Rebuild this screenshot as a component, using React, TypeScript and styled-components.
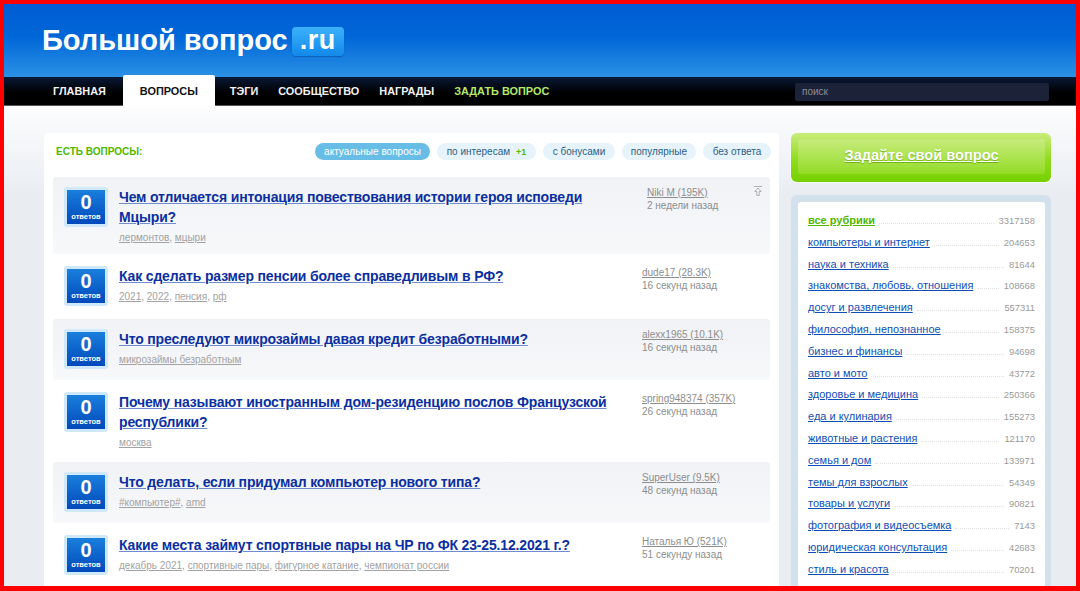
import React from "react";
import styled, { createGlobalStyle } from "styled-components";

const Global = createGlobalStyle`
  html, body { margin: 0; padding: 0; background: #fff; overflow: hidden; }
  * { box-sizing: border-box; }
  body { font-family: "Liberation Sans", Arial, sans-serif; }
`;

const Frame = styled.div`
  width: 1080px;
  height: 591px;
  border: 4px solid #ff0000;
  border-bottom-width: 5px;
  overflow: hidden;
  background: linear-gradient(180deg, #fdfdfe 102px, #e9edf2 190px);
`;

const Header = styled.header`
  height: 73px;
  padding: 19px 0 0 38px;
  display: flex;
  align-items: flex-start;
  background: linear-gradient(180deg, #005bd4 0%, #0067d8 45%, #2b91e4 100%);
`;

const LogoText = styled.span`
  font-size: 29px;
  line-height: 34px;
  font-weight: 700;
  color: #fff;
`;

const LogoBadge = styled.span`
  margin: 4px 0 0 4px;
  width: 52px;
  height: 29px;
  border-radius: 4px;
  background: linear-gradient(180deg, #3cb2fb 0%, #1288ea 100%);
  box-shadow: 0 1px 1px rgba(0, 50, 130, 0.4);
  color: #fff;
  font-size: 27px;
  line-height: 27px;
  font-weight: 700;
  text-align: center;
  letter-spacing: 0.5px;
`;

const Nav = styled.nav`
  height: 29px;
  padding-left: 39px;
  display: flex;
  align-items: stretch;
  background: linear-gradient(180deg, #0a1a38 0%, #000 55%, #000 100%);
  border-bottom: 1px solid #555;
  position: relative;
`;

const NavItem = styled.a<{ $active?: boolean; $accent?: boolean }>`
  display: flex;
  align-items: center;
  font-size: 10.9px;
  font-weight: 700;
  color: ${(p) => (p.$active ? "#111" : p.$accent ? "#b4e86a" : "#f2f2f2")};
  background: ${(p) => (p.$active ? "#fff" : "transparent")};
  padding: 0 ${(p) => (p.$active ? "17px" : "10px")};
  margin: ${(p) => (p.$active ? "-2px 5px 0 7px" : "0")};
  border-radius: ${(p) => (p.$active ? "2px 2px 0 0" : "0")};
  height: ${(p) => (p.$active ? "32px" : "auto")};
  white-space: nowrap;
`;

const Search = styled.div`
  margin: 6px 27px 0 auto;
  width: 254px;
  height: 18px;
  border-radius: 2px;
  background: #1c2238;
  color: #8a8d98;
  font-size: 10px;
  line-height: 18px;
  padding-left: 7px;
`;

const Main = styled.main`
  display: flex;
  align-items: flex-start;
  gap: 12px;
  padding: 27px 0 0 40px;
`;

const Card = styled.section`
  width: 735px;
  height: 480px;
  background: #fff;
  border-radius: 4px 4px 0 0;
  padding: 10px 9px 0 9px;
`;

const CardHead = styled.div`
  display: flex;
  align-items: center;
  height: 17px;
  margin-bottom: 17px;
`;

const CardTitle = styled.h2`
  margin: 0 auto 0 3px;
  font-size: 10px;
  line-height: 17px;
  font-weight: 700;
  color: #4fb800;
`;

const Pills = styled.div`
  display: flex;
  gap: 7px;
  margin-right: -1px;
`;

const Pill = styled.span<{ $active?: boolean; $w: number }>`
  width: ${(p) => p.$w}px;
  height: 17px;
  border-radius: 9px;
  background: ${(p) => (p.$active ? "#68bde6" : "#e6f3fb")};
  color: ${(p) => (p.$active ? "#fff" : "#2d5f86")};
  font-size: 10px;
  line-height: 17px;
  text-align: center;
  white-space: nowrap;
`;

const PlusOne = styled.b`
  color: #5db800;
  font-size: 9px;
  margin-left: 6px;
`;

const Row = styled.article<{ $shaded: boolean; $height: number }>`
  height: ${(p) => p.$height}px;
  padding: ${(p) => (p.$shaded ? "10px" : "12px")} 0 0 11px;
  display: grid;
  grid-template-columns: 44px 511px 1fr;
  column-gap: 11px;
  align-items: start;
  position: relative;
  border-radius: 3px;
  background: ${(p) =>
    p.$shaded ? "linear-gradient(180deg, #f0f2f5 0%, #f7f8fa 100%)" : "transparent"};
`;

const Stat = styled.div`
  width: 44px;
  height: 40px;
  padding-top: 2px;
  border: 3px solid #cfe8fb;
  border-radius: 3px;
  background: linear-gradient(180deg, #1a7fdc 0%, #0049bb 100%);
  background-clip: padding-box;
  color: #fff;
  text-align: center;
`;

const StatNum = styled.div`
  font-size: 20px;
  line-height: 20px;
  font-weight: 700;
`;

const StatLabel = styled.div`
  font-size: 7.5px;
  line-height: 9px;
  font-weight: 700;
`;

const Title = styled.a`
  display: block;
  font-size: 14px;
  letter-spacing: -0.16px;
  line-height: 20px;
  font-weight: 700;
  color: #0b2fa0;
  text-decoration: underline;
  text-decoration-color: #6f8cd0;
`;

const Tags = styled.div`
  margin-top: 1px;
  font-size: 10px;
  line-height: 20px;
  color: #999;
`;

const Tag = styled.a`
  color: #a2a2a2;
  text-decoration: underline;
`;

const Meta = styled.div<{ $shift: number; $raise: number }>`
  margin: ${(p) => -p.$raise}px 0 0 ${(p) => p.$shift}px;
  font-size: 10px;
  line-height: 13px;
  color: #8d8d8d;
  white-space: nowrap;
`;

const Author = styled.a`
  display: block;
  text-decoration: underline;
`;

const PinIcon = styled.svg`
  position: absolute;
  top: 9px;
  right: 8px;
`;

const Side = styled.aside`
  width: 260px;
  display: flex;
  flex-direction: column;
  gap: 13px;
`;

const AskButton = styled.a`
  height: 49px;
  padding: 6px 6px 8px 7px;
  border-radius: 6px;
  background: linear-gradient(180deg, #c9ec7b 0%, #8fdc1c 55%, #76d000 100%);
  box-shadow: 0 0 0 1px #f6f8fa;
`;

const AskInner = styled.span`
  display: block;
  height: 35px;
  border-radius: 2px;
  background: linear-gradient(180deg, #c7ec7d 0%, #93dc26 100%);
  color: #fff;
  font-size: 14.6px;
  line-height: 32px;
  font-weight: 700;
  text-align: center;
  text-decoration: underline;
  text-shadow: 0 1px 1px rgba(70, 130, 0, 0.5);
`;

const CatPanel = styled.div`
  padding: 7px 6px 0 7px;
  height: 400px;
  background: #d3e1ec;
  border-radius: 6px 6px 0 0;
`;

const CatInner = styled.ul`
  list-style: none;
  margin: 0;
  height: 100%;
  padding: 8px 10px 0 10px;
  background: #fff;
  border-radius: 3px 3px 0 0;
`;

const CatRow = styled.li`
  display: flex;
  align-items: baseline;
  height: 21.8px;
  line-height: 21.8px;
`;

const CatLink = styled.a<{ $all?: boolean }>`
  font-size: 11px;
  white-space: nowrap;
  font-weight: ${(p) => (p.$all ? 700 : 400)};
  color: ${(p) => (p.$all ? "#4fb800" : "#0f4fb5")};
  text-decoration: underline;
`;

const Leader = styled.span`
  flex: 1;
  margin: 0 5px 0 4px;
  border-bottom: 1px dotted #e2e2e2;
`;

const CatCount = styled.span`
  font-size: 9.4px;
  color: #9a9a9a;
`;

type Q = { title: string; tags: string[]; author: string; time: string; height: number; pin?: boolean };

const questions: Q[] = [
  { title: "Чем отличается интонация повествования истории героя исповеди Мцыри?", tags: ["лермонтов", "мцыри"], author: "Niki M (195K)", time: "2 недели назад", height: 77, pin: true },
  { title: "Как сделать размер пенсии более справедливым в РФ?", tags: ["2021", "2022", "пенсия", "рф"], author: "dude17 (28.3K)", time: "16 секунд назад", height: 65 },
  { title: "Что преследуют микрозаймы давая кредит безработными?", tags: ["микрозаймы безработным"], author: "alexx1965 (10.1K)", time: "16 секунд назад", height: 61 },
  { title: "Почему называют иностранным дом-резиденцию послов Французской республики?", tags: ["москва"], author: "spring948374 (357K)", time: "26 секунд назад", height: 82 },
  { title: "Что делать, если придумал компьютер нового типа?", tags: ["#компьютер#", "amd"], author: "SuperUser (9.5K)", time: "48 секунд назад", height: 61 },
  { title: "Какие места займут спортвные пары на ЧР по ФК 23-25.12.2021 г.?", tags: ["декабрь 2021", "спортивные пары", "фигурное катание", "чемпионат россии"], author: "Наталья Ю (521K)", time: "51 секунду назад", height: 66 },
];

const categories: [string, string][] = [
  ["все рубрики", "3317158"],
  ["компьютеры и интернет", "204653"],
  ["наука и техника", "81644"],
  ["знакомства, любовь, отношения", "108668"],
  ["досуг и развлечения", "557311"],
  ["философия, непознанное", "158375"],
  ["бизнес и финансы", "94698"],
  ["авто и мото", "43772"],
  ["здоровье и медицина", "250366"],
  ["еда и кулинария", "155273"],
  ["животные и растения", "121170"],
  ["семья и дом", "133971"],
  ["темы для взрослых", "54349"],
  ["товары и услуги", "90821"],
  ["фотография и видеосъемка", "7143"],
  ["юридическая консультация", "42683"],
  ["стиль и красота", "70201"],
];

export default function App() {
  return (
    <Frame>
      <Global />
      <Header>
        <LogoText>Большой вопрос</LogoText>
        <LogoBadge>.ru</LogoBadge>
      </Header>
      <Nav>
        <NavItem>ГЛАВНАЯ</NavItem>
        <NavItem $active>ВОПРОСЫ</NavItem>
        <NavItem>ТЭГИ</NavItem>
        <NavItem>СООБЩЕСТВО</NavItem>
        <NavItem>НАГРАДЫ</NavItem>
        <NavItem $accent>ЗАДАТЬ ВОПРОС</NavItem>
        <Search>поиск</Search>
      </Nav>
      <Main>
        <Card>
          <CardHead>
            <CardTitle>ЕСТЬ ВОПРОСЫ:</CardTitle>
            <Pills>
              <Pill $active $w={115}>актуальные вопросы</Pill>
              <Pill $w={99}>по интересам<PlusOne>+1</PlusOne></Pill>
              <Pill $w={72}>с бонусами</Pill>
              <Pill $w={74}>популярные</Pill>
              <Pill $w={68}>без ответа</Pill>
            </Pills>
          </CardHead>
          {questions.map((q, i) => (
            <Row key={q.title} $shaded={i % 2 === 0} $height={q.height}>
              <Stat>
                <StatNum>0</StatNum>
                <StatLabel>ответов</StatLabel>
              </Stat>
              <div>
                <Title>{q.title}</Title>
                <Tags>
                  {q.tags.map((t, k) => (
                    <React.Fragment key={t}>
                      {k > 0 && ", "}
                      <Tag>{t}</Tag>
                    </React.Fragment>
                  ))}
                </Tags>
              </div>
              <Meta $shift={q.pin ? 6 : 1} $raise={i % 2 === 0 ? 1 : 0}>
                <Author>{q.author}</Author>
                {q.time}
              </Meta>
              {q.pin && (
                <PinIcon width="8" height="10" viewBox="0 0 8 10" fill="none" stroke="#b0b0b0" strokeWidth="1">
                  <path d="M0 0.5H8M4 2L0.8 5.5H2.8V9.5H5.2V5.5H7.2L4 2Z" />
                </PinIcon>
              )}
            </Row>
          ))}
        </Card>
        <Side>
          <AskButton>
            <AskInner>Задайте свой вопрос</AskInner>
          </AskButton>
          <CatPanel>
            <CatInner>
              {categories.map(([name, count], i) => (
                <CatRow key={name}>
                  <CatLink $all={i === 0}>{name}</CatLink>
                  <Leader />
                  <CatCount>{count}</CatCount>
                </CatRow>
              ))}
            </CatInner>
          </CatPanel>
        </Side>
      </Main>
    </Frame>
  );
}
